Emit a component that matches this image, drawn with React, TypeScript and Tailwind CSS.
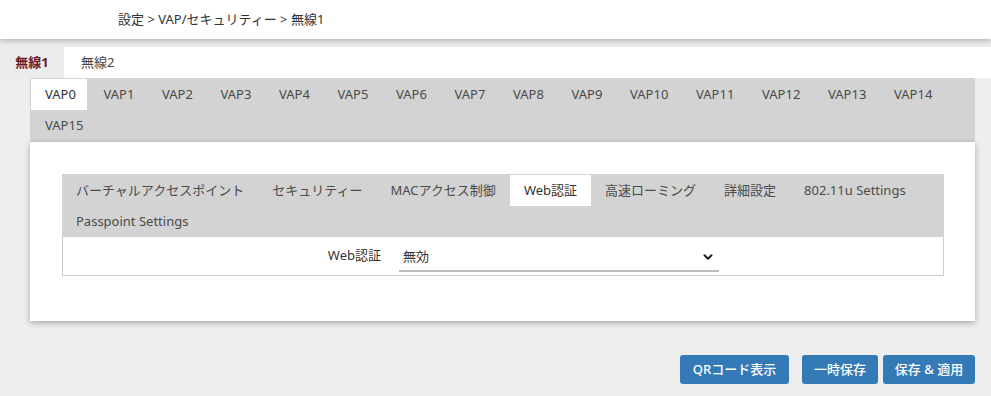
import { ChevronDown } from "lucide-react";

const VAPS = Array.from({ length: 16 }, (_, i) => `VAP${i}`);

const SUB_TABS = [
  "バーチャルアクセスポイント",
  "セキュリティー",
  "MACアクセス制御",
  "Web認証",
  "高速ローミング",
  "詳細設定",
  "802.11u Settings",
  "Passpoint Settings",
];

export default function App() {
  return (
    <div
      className="w-[991px] h-[396px] bg-[#eeeeee] text-[13px] text-[#333] overflow-hidden"
      style={{ fontFamily: '"Noto Sans", "Noto Sans CJK JP", sans-serif' }}
    >
      {/* Header */}
      <div className="relative z-10 h-[39px] bg-white pl-[118px] flex items-center shadow-[0_2px_6px_rgba(0,0,0,0.25)]">
        <span className="text-[#333]">設定 &gt; VAP/セキュリティー &gt; 無線1</span>
      </div>

      {/* Radio tabs */}
      <div className="mt-[8px] h-[31px] bg-white flex">
        <div className="w-[64px] flex items-center justify-center bg-[#ececec] font-bold text-[#6b1a2b]">無線1</div>
        <div className="px-[17px] flex items-center text-[#444]">無線2</div>
      </div>

      <div className="mx-[16px] ml-[30px]">
        {/* VAP tabs */}
        <div className="bg-[#d3d3d3] flex flex-wrap pt-[1px] pl-[1px] h-[64px]">
          {VAPS.map((v, i) => (
            <div
              key={v}
              className={`h-[31px] pl-[14px] mr-[3px] flex items-center ${
                i < 10 ? "w-[55.5px]" : "w-[63px]"
              } ${i === 0 ? "bg-white text-[#333]" : "text-[#4a4a4a]"}`}
            >
              {v}
            </div>
          ))}
        </div>

        {/* Panel */}
        <div className="bg-white shadow-[0_2px_6px_rgba(0,0,0,0.3)] pt-[32px] pb-[45px] pl-[32px] pr-[31px]">
          <div className="bg-[#d3d3d3] flex flex-wrap pt-[1px] h-[63px]">
            {SUB_TABS.map((t) => (
              <div
                key={t}
                className={`h-[31px] px-[14px] flex items-center ${
                  t === "Web認証" ? "bg-white text-[#333]" : "text-[#4a4a4a]"
                }`}
              >
                {t}
              </div>
            ))}
          </div>
          <div className="border border-t-0 border-[#cccccc] h-[39px] flex items-center">
            <div className="w-[318px] text-right text-[#333]">Web認証</div>
            <div className="ml-[18px] w-[320px] h-[28px] mt-[4px] border-b-2 border-[#bbbbbb] flex items-center justify-between pl-[4px] pr-[4px]">
              <span className="text-[#333]">無効</span>
              <ChevronDown className="w-[14px] h-[14px] text-[#222]" strokeWidth={3.5} />
            </div>
          </div>
        </div>
      </div>

      {/* Buttons */}
      <div className="mt-[34px] pr-[16px] flex justify-end">
        <button className="h-[29px] w-[109px] rounded-[3px] bg-[#337ab7] text-white font-medium">QRコード表示</button>
        <button className="ml-[13px] h-[29px] w-[76px] rounded-[3px] bg-[#337ab7] text-white font-medium">一時保存</button>
        <button className="ml-[5px] h-[29px] w-[92px] rounded-[3px] bg-[#337ab7] text-white font-medium">保存 &amp; 適用</button>
      </div>
    </div>
  );
}
